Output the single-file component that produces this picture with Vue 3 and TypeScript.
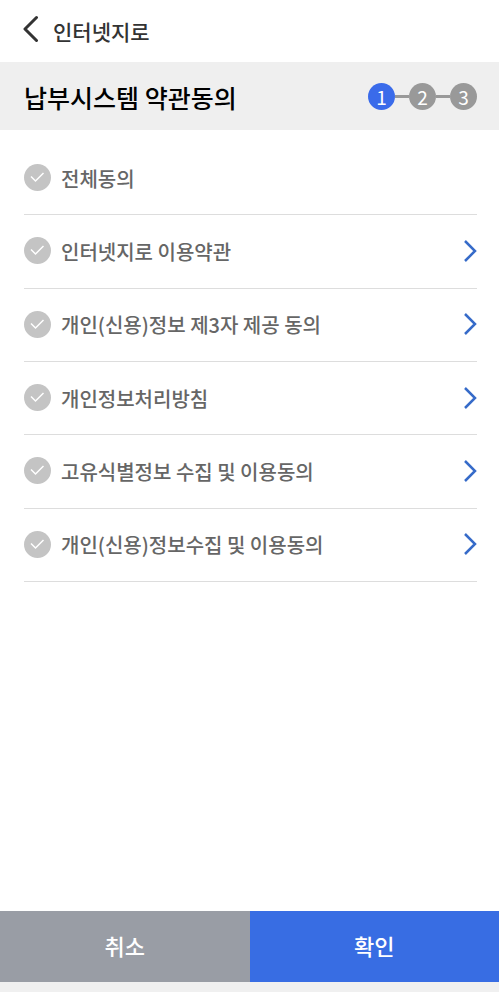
<script setup lang="ts">
import { computed, ref } from 'vue'

interface Term {
  id: string
  title: string
}

const steps: number[] = [1, 2, 3]
const currentStep = ref<number>(1)

const terms: Term[] = [
  { id: 'service', title: '인터넷지로 이용약관' },
  { id: 'third-party', title: '개인(신용)정보 제3자 제공 동의' },
  { id: 'privacy', title: '개인정보처리방침' },
  { id: 'unique-id', title: '고유식별정보 수집 및 이용동의' },
  { id: 'collection', title: '개인(신용)정보수집 및 이용동의' },
]

const agreed = ref<string[]>([])

const allAgreed = computed<boolean>({
  get: () => agreed.value.length === terms.length,
  set: (value) => {
    agreed.value = value ? terms.map((term) => term.id) : []
  },
})
</script>

<template>
  <div class="page">
    <header class="topbar">
      <button class="back" type="button" aria-label="뒤로">
        <svg width="16" height="28" viewBox="0 0 16 28" aria-hidden="true">
          <path d="M13.5 2.5 L2 14 L13.5 25.5" fill="none" stroke="#333" stroke-width="3" stroke-linecap="round" stroke-linejoin="round" />
        </svg>
      </button>
      <span class="service">인터넷지로</span>
    </header>

    <div class="heading">
      <h1>납부시스템 약관동의</h1>
      <ol class="steps">
        <li v-for="step in steps" :key="step" :class="{ current: step === currentStep }">
          <span class="number">{{ step }}</span>
        </li>
      </ol>
    </div>

    <main class="content">
      <ul class="terms">
        <li>
          <label class="agree" for="agree-all">
            <span class="check">
              <input id="agree-all" v-model="allAgreed" type="checkbox" />
              <svg viewBox="0 0 27 27" aria-hidden="true"><path d="M7 12.5 L11.5 17 L19.5 9" /></svg>
            </span>
            <span class="title">전체동의</span>
          </label>
        </li>
        <li v-for="term in terms" :key="term.id">
          <label class="agree" :for="term.id">
            <span class="check">
              <input :id="term.id" v-model="agreed" type="checkbox" :value="term.id" />
              <svg viewBox="0 0 27 27" aria-hidden="true"><path d="M7 12.5 L11.5 17 L19.5 9" /></svg>
            </span>
            <span class="title">{{ term.title }}</span>
          </label>
          <a class="more" :href="'#' + term.id" :aria-label="term.title">
            <svg width="14" height="24" viewBox="0 0 14 24" aria-hidden="true">
              <path d="M2 2 L12 12 L2 22" fill="none" stroke="#366bc9" stroke-width="2.5" />
            </svg>
          </a>
        </li>
      </ul>
    </main>

    <footer class="actions">
      <button class="cancel" type="button">취소</button>
      <button class="confirm" type="button">확인</button>
    </footer>
  </div>
</template>

<style>
body {
  background: #fff;
}
</style>

<style scoped>
.page {
  display: flex;
  flex-direction: column;
  box-sizing: border-box;
  min-height: 100vh;
  font-family: "Noto Sans CJK KR", "Noto Sans", sans-serif;
  font-weight: 500;
  color: #666;
}

button {
  padding: 0;
  border: 0;
  font: inherit;
  cursor: pointer;
}

.topbar {
  display: flex;
  align-items: center;
  gap: 14px;
  height: 62px;
  padding: 0 24px;
  box-sizing: border-box;
  color: #333;
}

.back {
  display: flex;
  margin-left: -1px;
  padding-bottom: 4px;
  background: none;
}

.service {
  font-size: 21px;
  line-height: 30px;
}

.heading {
  display: flex;
  align-items: center;
  justify-content: space-between;
  height: 68px;
  padding: 0 22px 0 24px;
  box-sizing: border-box;
  background: #efefef;
}

h1 {
  margin: 0;
  padding-top: 2px;
  font-size: 25px;
  font-weight: 500;
  line-height: 38px;
  color: #000;
}

.steps {
  display: flex;
  margin: 0;
  padding: 0;
  list-style: none;
}

.steps li {
  display: flex;
  align-items: center;
}

.steps li + li::before {
  content: "";
  width: 14px;
  height: 3px;
  background: #999;
}

.number {
  width: 27px;
  height: 27px;
  border-radius: 50%;
  background: #999;
  color: #fff;
  font-size: 19px;
  font-weight: 400;
  line-height: 27px;
  text-align: center;
}

.current .number {
  background: #3a6bea;
}

.content {
  flex: 1;
  padding: 12px 22px 24px 24px;
}

.terms {
  display: grid;
  grid-auto-rows: 1fr;
  min-height: 440px;
  margin: 0;
  padding: 0;
  list-style: none;
}

.terms li {
  display: flex;
  align-items: center;
  justify-content: space-between;
  padding-bottom: 1px;
  border-bottom: 1px solid #ddd;
}

.agree {
  display: flex;
  align-items: center;
  gap: 10px;
  font-size: 20px;
  line-height: 30px;
  cursor: pointer;
}

.title {
  padding-top: 2px;
}

.check {
  display: grid;
  flex: none;
  width: 27px;
  height: 27px;
}

.check input,
.check svg {
  grid-area: 1 / 1;
  width: 27px;
  height: 27px;
  margin: 0;
}

.check input {
  appearance: none;
  border-radius: 50%;
  background: #c4c4c4;
  cursor: pointer;
}

.check input:checked {
  background: #386de3;
}

.check svg {
  pointer-events: none;
}

.check path {
  fill: none;
  stroke: #fff;
  stroke-width: 1.5;
}

.more {
  display: flex;
}

.actions {
  display: grid;
  grid-template-columns: 1fr 1fr;
  border-bottom: 10px solid #f0f0f0;
}

.actions button {
  height: 71px;
  padding-bottom: 3px;
  color: #fff;
  font-size: 22px;
  line-height: 32px;
}

.cancel {
  background: #999da5;
}

.actions .confirm {
  background: #386de3;
}
</style>
